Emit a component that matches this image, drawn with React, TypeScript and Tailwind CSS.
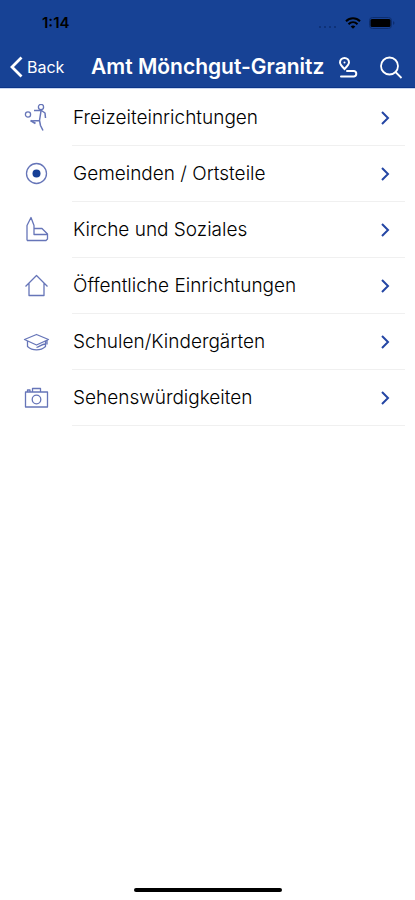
import React from 'react';

type IconProps = { children: React.ReactNode };

function RowIcon({ children }: IconProps) {
  return (
    <svg
      className="w-7 h-7 shrink-0 text-[#6675b8]"
      viewBox="0 0 28 28"
      fill="none"
      stroke="currentColor"
      strokeWidth={1.3}
      strokeLinejoin="round"
      aria-hidden="true"
    >
      {children}
    </svg>
  );
}

const entries = [
  {
    label: 'Freizeiteinrichtungen',
    icon: (
      <>
        <circle cx="19" cy="3" r="2.6" />
        <circle cx="6" cy="10.500" r="2.600" />
        <path d="M12 6.500h7.500l3.500 2.500.5 5M19 7l-1.500 9.500M17.500 16.500L9 17M17.500 16.500l1 5 2.500 5" strokeWidth="1.500" />
        <path d="M8.500 16.500l5 3" strokeWidth="2" />
      </>
    ),
  },
  {
    label: 'Gemeinden / Ortsteile',
    icon: (
      <>
        <circle cx="14.500" cy="13.500" r="10" />
        <circle cx="14.500" cy="13.500" r="4" fill="#163f96" stroke="none" />
      </>
    ),
  },
  {
    label: 'Kirche und Soziales',
    icon: <path d="M5 24.500V9.500L9 1.500l3 8V18.500h13M12 12.500h8l5.500 5.500v5l-1.500 1.500H5" />,
  },
  {
    label: 'Öffentliche Einrichtungen',
    icon: <path d="M3.500 14.500l11-11 11 11M7 11.500V23.500h15V11.500" />,
  },
  {
    label: 'Schulen/Kindergärten',
    icon: (
      <>
        <path d="M14.500 6.500L2.500 11.500l12 5.500L26.500 11.500z" />
        <path d="M5.500 13v5.500c5 4.500 13 4.500 18 0V13M14.500 19.500c3.500-1 5-3.500 9-3.500M25 12v4.500" />
      </>
    ),
  },
  {
    label: 'Sehenswürdigkeiten',
    icon: (
      <>
        <path d="M3.500 8h22v15h-22zM10.500 8V4.500h8V8M5.500 8V6h2.500v2" />
        <circle cx="14.500" cy="15.500" r="4.300" />
      </>
    ),
  },
];

function StatusBar() {
  return (
    <div className="flex h-11 items-center justify-between pl-[42px] pr-5 pt-0.5 text-black">
      <span className="text-[15px] font-semibold">1:14</span>
      <div className="flex items-center gap-2">
        <svg className="w-5 h-3" viewBox="0 0 20 12" fill="#0d2e70" aria-hidden="true">
          <circle cx="3" cy="10" r="1" />
          <circle cx="8" cy="10" r="1" />
          <circle cx="13" cy="10" r="1" />
          <circle cx="18" cy="10" r="1" />
        </svg>
        <svg className="w-4 h-3" viewBox="0 0 16 12" fill="none" stroke="currentColor" strokeWidth="2" aria-hidden="true">
          <path d="M1 4.300c4-4 10-4 14 0M3.500 7.200c2.600-2.500 6.400-2.500 9 0" />
          <path d="M8 11.800L5.700 9.400c1.300-1.200 3.300-1.200 4.600 0z" fill="currentColor" stroke="none" />
        </svg>
        <svg className="w-[26px] h-3" viewBox="0 0 26 12" aria-hidden="true">
          <rect x="0.500" y="0.500" width="22" height="11" rx="3" fill="none" stroke="#0d2e70" />
          <rect x="1.500" y="2" width="20" height="8" rx="1.500" fill="currentColor" />
          <path d="M24 4v4c2-1 2-3 0-4z" fill="#0d2e70" />
        </svg>
      </div>
    </div>
  );
}

export default function App() {
  return (
    <div className="flex min-h-screen flex-col bg-white font-['Inter',sans-serif] text-black">
      <header className="border-b border-[#c9d6ef] bg-[#174295] text-white">
        <StatusBar />
        <nav className="flex h-11 items-center border-b border-[#0b3488] pl-2 pr-3 pt-0.5">
          <button type="button" className="flex items-center gap-[3px] text-base">
            <svg className="w-4 h-6" viewBox="0 0 16 24" fill="none" stroke="currentColor" strokeWidth="2.800" aria-hidden="true">
              <path d="M13.500 2.500L4 12l9.500 9.500" />
            </svg>
            Back
          </button>
          <h1 className="flex-1 whitespace-nowrap pl-4 text-center text-[21px] font-semibold">
            Amt Mönchgut-Granitz
          </h1>
          <div className="flex items-center gap-5">
            <button type="button" aria-label="Route">
              <svg className="w-6 h-6" viewBox="0 0 24 24" fill="none" stroke="currentColor" strokeWidth="2" aria-hidden="true">
                <path d="M9.500 14C7 11.500 5 9.500 5 7.500a4.500 4.500 0 0 1 9 0c0 2-2 4-4.500 6.500z" />
                <circle cx="9.500" cy="7.500" r="1" fill="currentColor" stroke="none" />
                <path d="M12 16h7a2.800 2.800 0 0 1 0 5.500H6" strokeLinecap="round" />
              </svg>
            </button>
            <button type="button" aria-label="Suchen">
              <svg className="w-6 h-6" viewBox="0 0 24 24" fill="none" stroke="currentColor" strokeWidth="1.800" aria-hidden="true">
                <circle cx="10.500" cy="11" r="8.500" />
                <path d="M16.500 17l6 6" />
              </svg>
            </button>
          </div>
        </nav>
      </header>

      <main className="flex-1 pt-px">
        <ul>
          {entries.map(({ label, icon }) => (
            <li key={label}>
              <a href="#" className="flex h-14 items-center pl-[22px] pr-[10px]">
                <RowIcon>{icon}</RowIcon>
                <span className="ml-[22px] flex h-full flex-1 items-center justify-between border-b border-[#f0f0f0] pl-px pr-3 pt-0.5 text-[19px] font-light">
                  {label}
                  <svg className="w-4 h-4" viewBox="0 0 16 16" fill="none" stroke="#2446a4" strokeWidth="2" aria-hidden="true">
                    <path d="M5 1l6 6-6 6" />
                  </svg>
                </span>
              </a>
            </li>
          ))}
        </ul>
      </main>

      <footer className="flex justify-center pb-2">
        <div className="h-1 w-[148px] rounded-full bg-black" />
      </footer>
    </div>
  );
}
